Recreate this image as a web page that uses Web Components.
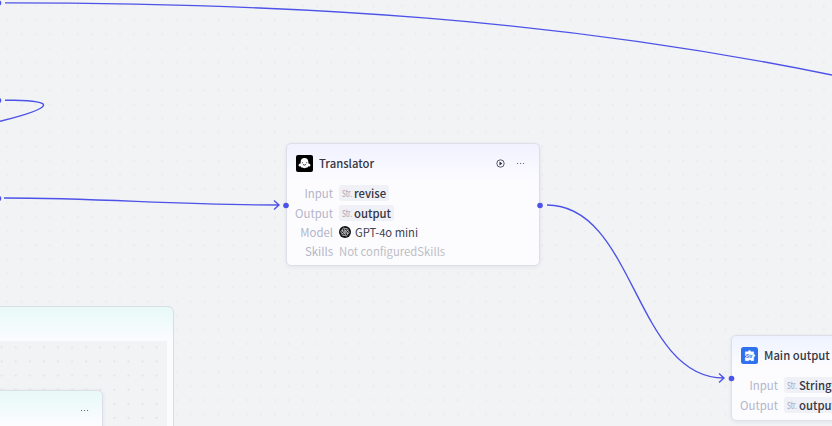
<!DOCTYPE html>
<html lang="en"><head><meta charset="utf-8"><title>Workflow canvas</title>
<style>html,body{margin:0;height:100%;overflow:hidden}body{font-family:"Noto Sans CJK SC",sans-serif}</style></head>
<body>
<flow-canvas>
  <flow-group style="left:-200px;top:306px"></flow-group>
  <flow-node class="teal" style="left:-149px;top:390px;width:250px;height:120px"><node-menu slot="actions"></node-menu></flow-node>
  <flow-node style="left:286px;top:143px;width:252px;height:121px">
    <node-icon slot="icon" kind="bot"></node-icon><span slot="title">Translator</span><node-menu slot="actions" play></node-menu>
    <node-row label="Input"><type-chip>revise</type-chip></node-row>
    <node-row label="Output"><type-chip>output</type-chip></node-row>
    <node-row label="Model" class="model"><model-name>GPT-4o mini</model-name></node-row>
    <node-row label="Skills" class="skills">Not configuredSkills</node-row>
  </flow-node>
  <flow-node class="blue" style="left:731px;top:335px;width:252px;height:84px">
    <node-icon slot="icon" kind="output"></node-icon><span slot="title">Main output</span>
    <node-row label="Input"><type-chip>String</type-chip></node-row>
    <node-row label="Output"><type-chip>output</type-chip></node-row>
  </flow-node>
  <flow-edges></flow-edges>
</flow-canvas>
<script>
const define=(name,html,setup)=>customElements.define(name,class extends HTMLElement{
  constructor(){super();this.attachShadow({mode:'open'}).innerHTML=html}
  connectedCallback(){if(setup)setup(this,this.shadowRoot)}
});
define('flow-canvas',`<style>:host{display:block;position:relative;width:832px;height:426px;overflow:hidden;background:radial-gradient(circle at 7.4px 6px,#eaebed 0,#eaebed .8px,transparent 1.3px) 0 0/14.09px 14.09px,#f2f3f5}</style><slot></slot>`);
define('flow-group',`<style>:host{position:absolute;box-sizing:border-box;width:374px;height:200px;border:1px solid #d9dce2;border-radius:6px;background:linear-gradient(#e8f9f8,#fcfcff 35px);padding:34px 6px 0}
div{height:180px;background:radial-gradient(circle at 11.7px 6.3px,#e3e4e7 0,#e3e4e7 .8px,transparent 1.3px) 0 0/14.09px 14.09px,#f2f3f5}</style><div></div>`);
define('flow-node',`<style>
:host{display:flex;flex-direction:column;position:absolute;border:1px solid #dcdee8;border-radius:5px;background:linear-gradient(#f1f1ff,#fcfcff 37px);box-shadow:0 1px 4px #1c205012}
:host(.teal){background:linear-gradient(#e8f9f8,#fcfcff 35px)}:host(.blue){background:linear-gradient(#edf3ff,#fcfcff 30px)}
header{display:flex;align-items:center;height:39px;padding:0 14px 0 9px;gap:6px;font-weight:500;font-size:11.3px;line-height:16px;color:#343744}
.title{padding-bottom:1px}.actions{margin-left:auto}:host(.teal) .actions{margin-right:-1px}main{display:flex;flex-direction:column}</style>
<header><slot name="icon"></slot><div class="title"><slot name="title"></slot></div><div class="actions"><slot name="actions"></slot></div></header><main><slot></slot></main>`);
define('node-row',`<style>:host{display:grid;grid-template-columns:46px 1fr;column-gap:6px;height:20px;align-items:center;font-size:11.3px;line-height:18px;color:#bdbec4;white-space:nowrap}:host(.model){height:18px}:host(.skills){height:19px}
b{font-weight:400;text-align:right;font-size:11.4px;color:#b3b5c8}div{display:flex;align-items:center}</style><b></b><div><slot></slot></div>`,(h,r)=>r.querySelector('b').textContent=h.getAttribute('label'));
define('type-chip',`<style>:host{display:inline-flex;align-items:center;height:16px;line-height:16px;border-radius:3px;background:#f0f0f7;padding:0 3px;font-size:11.3px;font-weight:500;color:#343744}
i{display:block;width:12px;font:400 9.5px/16px "Noto Sans CJK SC",sans-serif;color:#a4a6b8}i span{display:inline-block;transform:scaleX(.68);transform-origin:left}</style><i><span>Str.</span></i><slot></slot>`);
define('model-name',`<style>:host{display:flex;align-items:center;gap:4px;color:#404350;font-size:11.2px}svg{width:12px;height:12px}</style>
<svg viewBox="0 0 24 24"><circle cx="12" cy="12" r="12" fill="#111"/><g fill="none" stroke="#ddd" stroke-width="1.35"><path d="M10 13.2V7.2l4-2.2c3-1.2 5.5 2.2 3.7 4.7"/><path d="M10 13.2V7.2l4-2.2c3-1.2 5.5 2.2 3.7 4.7" transform="rotate(60 12 12)"/><path d="M10 13.2V7.2l4-2.2c3-1.2 5.5 2.2 3.7 4.7" transform="rotate(120 12 12)"/><path d="M10 13.2V7.2l4-2.2c3-1.2 5.5 2.2 3.7 4.7" transform="rotate(180 12 12)"/><path d="M10 13.2V7.2l4-2.2c3-1.2 5.5 2.2 3.7 4.7" transform="rotate(240 12 12)"/><path d="M10 13.2V7.2l4-2.2c3-1.2 5.5 2.2 3.7 4.7" transform="rotate(300 12 12)"/></g></svg><slot></slot>`);
define('node-icon',`<style>:host{display:block;width:17px;height:17px}svg{display:block}</style><svg width="17" height="17" viewBox="0 0 17 17"></svg>`,(h,r)=>{
r.querySelector('svg').innerHTML=h.getAttribute('kind')==='bot'?
'<rect width="17" height="17" rx="2" fill="#000"/><path d="M4.6 7.2C4.6 4.6 6.1 3 8.5 3s3.9 1.6 3.9 4.2v1.2c1.6.2 2.3 1.2 2 2.2-.3.9-1.3 1-2.1.6-.5 1.2-1.2 1.7-2 1.4-1 .9-2.6.9-3.6 0-.9.3-1.5-.2-2-1.4-.9.4-1.8.3-2.1-.6-.3-1 .4-2 2-2.2Z" fill="#fff"/><path d="M6.4 7.3v1M10.6 7.3v1M7 9.5q1.5 1.2 3 0" fill="none" stroke="#111" stroke-width=".8"/>':
'<rect width="17" height="17" rx="2.5" fill="#2f70ef"/><path d="M4.3 4.8H7.4C7 3 10 3 9.6 4.8h3.1v2.8c1.7-.4 1.7 2.5 0 2.1v4H10c.2-1.4-2.4-1.4-2.2 0H4.3v-3.2c1.5.2 1.5-2.2 0-2Z" fill="#fff" stroke="#fff" stroke-width=".4"/><text x="5" y="10.6" font-family="Liberation Sans,sans-serif" font-size="4.8" font-weight="700" fill="#2f70ef">Str</text>'});
define('node-menu',`<style>:host{display:flex;align-items:center;gap:11px}svg{display:block}</style><svg class="play" width="9" height="9" viewBox="0 0 9 9"><circle cx="4.5" cy="4.5" r="3.7" fill="none" stroke="#424553" stroke-width=".9"/><path d="M3.5 2.5v4L6.3 4.5Z" fill="#292d3a"/></svg><svg width="9" height="3" viewBox="0 0 9 3" fill="#6b6e79"><rect x="1" y="1" width="1.1" height="1"/><rect x="4" y="1" width="1.1" height="1"/><rect x="7" y="1" width="1.1" height="1"/></svg>`,(h,r)=>{if(!h.hasAttribute('play'))r.querySelector('.play').remove()});
define('flow-edges',`<style>:host{position:absolute;inset:0;pointer-events:none}svg{display:block}</style><svg width="832" height="426"><g fill="none" stroke="#4d53e8" stroke-width="1.4"><path d="M5 2.9C300 3 560 19.5 832 75"/><path d="M5 100.3H14C54 101 57 107 0 121.3"/><path d="M4 198C105 198 170 205 279 205M274 200.5l5 4.5-5 4.5"/><path d="M547 205C635 205 635 378 724 378M719 373.5l5 4.5-5 4.5"/></g><g fill="#4d53e8"><circle cx="-1.5" cy="3" r="2.8"/><circle cx="-1.5" cy="100.5" r="2.8"/><circle cx="-1.5" cy="198.5" r="2.8"/><circle cx="286" cy="205.5" r="2.8"/><circle cx="540" cy="205.5" r="2.8"/><circle cx="731.5" cy="378.5" r="2.8"/></g></svg>`);
</script></body></html>
